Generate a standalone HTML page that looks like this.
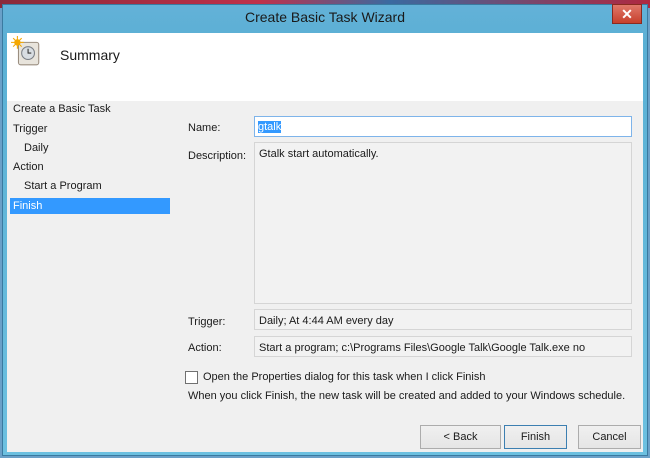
<!DOCTYPE html>
<html><head><style>
*{margin:0;padding:0;box-sizing:border-box}
body{width:650px;height:458px;overflow:hidden;background:#6aa0c8;font-family:"Liberation Sans",sans-serif;font-size:11px;color:#1a1a1a;position:relative}
.top{position:absolute;left:0;top:0;width:650px;height:8px;background:linear-gradient(90deg,#8a2a3a,#c0304a 40%,#3a6aa0 60%,#b02840)}
.frame{position:absolute;left:2px;top:4px;width:646px;height:452px;background:linear-gradient(#63b1d8,#5ab0d4 40px,#6cc0e0);border:1px solid #3a7aa0}
.title{position:absolute;left:0;top:9px;width:650px;text-align:center;font-size:14px;color:#1a1a1a}
.close{position:absolute;left:612px;top:4px;width:30px;height:20px;background:linear-gradient(#e0786a,#c7402c);border:1px solid #8a2a20;color:#fff;font-weight:bold;font-size:14px;text-align:center;line-height:18px}
.client{position:absolute;left:7px;top:33px;width:636px;height:419px;background:#f0f0f0}
.head{position:absolute;left:0;top:0;width:636px;height:68px;background:#fff}
.abs{position:absolute;white-space:nowrap}
.box{position:absolute;background:#f2f2f2;border:1px solid #d5d5d5;padding:5px 4px 3px}
.btn{position:absolute;height:24px;border:1px solid #acacac;background:linear-gradient(#f0f0f0,#e5e5e5);text-align:center;line-height:23px}
</style></head><body>
<div class="top"></div>
<div class="frame"></div>
<div class="title">Create Basic Task Wizard</div>
<div class="close">✕</div>
<div class="client">
 <div class="head">
  <svg class="abs" style="left:4px;top:3px" width="32" height="32" viewBox="0 0 30 30">
   <rect x="7" y="6" width="19" height="21" rx="2" fill="#e8e4dc" stroke="#9a8e80"/>
   <circle cx="16" cy="16" r="6" fill="#d8dde2" stroke="#7a7f86"/>
   <path d="M16 12v4h3" stroke="#333" fill="none"/>
   <circle cx="6" cy="6" r="3" fill="#f5a800"/>
   <path d="M6 0v12M0 6h12M2 2l8 8M10 2l-8 8" stroke="#f5a800" stroke-width="1"/>
  </svg>
  <div class="abs" style="left:53px;top:14px;font-size:14px">Summary</div>
 </div>
 <div class="abs" style="left:6px;top:70px">Create a Basic Task</div>
 <div class="abs" style="left:6px;top:90px">Trigger</div>
 <div class="abs" style="left:17px;top:109px">Daily</div>
 <div class="abs" style="left:6px;top:128px">Action</div>
 <div class="abs" style="left:17px;top:147px">Start a Program</div>
 <div class="abs" style="left:3px;top:165px;width:160px;height:16px;background:#3399ff;color:#fff;padding-left:3px;line-height:17px">Finish</div>

 <div class="abs" style="left:181px;top:89px">Name:</div>
 <div class="box" style="left:247px;top:83px;width:378px;height:21px;background:#fff;border-color:#7eb4ea;padding:4px 3px 2px"><span style="background:#3399ff;color:#fff">gtalk</span></div>
 <div class="abs" style="left:181px;top:117px">Description:</div>
 <div class="box" style="left:247px;top:109px;width:378px;height:162px">Gtalk start automatically.</div>
 <div class="abs" style="left:181px;top:283px">Trigger:</div>
 <div class="box" style="left:247px;top:276px;width:378px;height:21px">Daily; At 4:44 AM every day</div>
 <div class="abs" style="left:181px;top:309px">Action:</div>
 <div class="box" style="left:247px;top:303px;width:378px;height:21px">Start a program; c:\Programs Files\Google Talk\Google Talk.exe no</div>

 <div class="abs" style="left:178px;top:338px;width:13px;height:13px;border:1px solid #707070;background:#fff"></div>
 <div class="abs" style="left:196px;top:338px">Open the Properties dialog for this task when I click Finish</div>
 <div class="abs" style="left:181px;top:357px">When you click Finish, the new task will be created and added to your Windows schedule.</div>

 <div class="btn" style="left:413px;top:392px;width:81px">&lt; Back</div>
 <div class="btn" style="left:497px;top:392px;width:63px;border-color:#3c7fb1">Finish</div>
 <div class="btn" style="left:571px;top:392px;width:63px">Cancel</div>
</div>
</body></html>
